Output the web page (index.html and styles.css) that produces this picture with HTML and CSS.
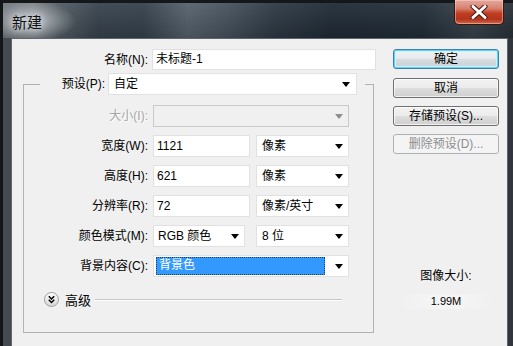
FILE: index.html
```html
<!DOCTYPE html>
<html lang="zh-CN">
<head>
<meta charset="utf-8">
<title>新建</title>
<link rel="stylesheet" href="styles.css">
</head>
<body>
<div class="window">
  <div class="titlebar">
    <span class="title">新建</span>
    <div class="close">
      <svg width="20" height="14" viewBox="0 0 20 14">
        <path d="M4 1.5 L16 12.5 M16 1.5 L4 12.5" stroke="#4a1a10" stroke-width="5" stroke-linecap="round"/>
        <path d="M4 1.5 L16 12.5 M16 1.5 L4 12.5" stroke="#ffffff" stroke-width="3" stroke-linecap="round"/>
      </svg>
    </div>
  </div>
  <div class="panel">
    <div class="main">
      <div class="name-row">
        <span class="lbl name-lbl">名称(N):</span>
        <div class="field name-field">未标题-1</div>
      </div>
      <fieldset class="group">
        <legend class="legend">
          <span class="lbl preset-lbl">预设(P):</span>
          <div class="field select preset-select">自定<i class="arrow"></i></div>
        </legend>
        <div class="row first">
          <span class="lbl row-lbl disabled">大小(I):</span>
          <div class="field select full disabled-field"><i class="arrow grey"></i></div>
        </div>
        <div class="row">
          <span class="lbl row-lbl">宽度(W):</span>
          <div class="field num">1121</div>
          <div class="field select unit">像素<i class="arrow"></i></div>
        </div>
        <div class="row">
          <span class="lbl row-lbl">高度(H):</span>
          <div class="field num">621</div>
          <div class="field select unit">像素<i class="arrow"></i></div>
        </div>
        <div class="row">
          <span class="lbl row-lbl">分辨率(R):</span>
          <div class="field num">72</div>
          <div class="field select unit">像素/英寸<i class="arrow"></i></div>
        </div>
        <div class="row">
          <span class="lbl row-lbl">颜色模式(M):</span>
          <div class="field select mode">RGB 颜色<i class="arrow"></i></div>
          <div class="field select unit">8 位<i class="arrow"></i></div>
        </div>
        <div class="row">
          <span class="lbl row-lbl">背景内容(C):</span>
          <div class="field select full bg-select"><span class="hl">背景色</span><i class="arrow"></i></div>
        </div>
        <div class="advanced">
          <span class="adv-icon">
            <svg width="15" height="15" viewBox="0 0 15 15">
              <defs>
                <linearGradient id="g" x1="0" y1="0" x2="0" y2="1">
                  <stop offset="0" stop-color="#ffffff"/>
                  <stop offset="1" stop-color="#d6d6d6"/>
                </linearGradient>
              </defs>
              <circle cx="7.5" cy="7.5" r="7" fill="url(#g)" stroke="#9c9c9c"/>
              <path d="M4.8 4.3 L7.5 7 L10.2 4.3 M4.8 7.8 L7.5 10.5 L10.2 7.8" fill="none" stroke="#000" stroke-width="1.5"/>
            </svg>
          </span>
          <span class="adv-text">高级</span>
          <span class="adv-line"></span>
        </div>
      </fieldset>
    </div>
    <div class="side">
      <div class="btn default">确定</div>
      <div class="btn">取消</div>
      <div class="btn">存储预设(S)...</div>
      <div class="btn off">删除预设(D)...</div>
      <div class="info">
        <div class="info-lbl">图像大小:</div>
        <div class="info-val">1.99M</div>
      </div>
    </div>
  </div>
</div>
</body>
</html>
```
FILE: styles.css
```css
* { box-sizing: border-box; }

body {
  margin: 0;
  width: 513px;
  height: 346px;
  overflow: hidden;
  background: #121517;
  font-family: "Liberation Sans", "Noto Sans CJK SC", sans-serif;
  font-size: 12px;
  color: #000;
}

.window {
  height: 346px;
  border-left: 3px solid #131619;
  border-top: 3px solid #15181b;
  padding: 0 5px 0 8px;
  background:
    radial-gradient(ellipse 45px 20px at 28px 18px, rgba(215,220,224,0.75), rgba(215,220,224,0) 100%) 0 0 / 100% 35px no-repeat,
    linear-gradient(to bottom, rgba(255,255,255,0.06), rgba(0,0,0,0.15)) 0 0 / 100% 35px no-repeat,
    linear-gradient(to right, #6f767c 0, #757b81 30px, #535c65 55px, #37424d 95px, #34404b 140px, #56616c 185px, #46515c 225px, #2e3944 270px, #1f2a35 330px, #222d38 420px, #38424b 470px, #262e35 513px) 0 0 / 100% 35px no-repeat,
    linear-gradient(to right, #454a51, #30363c);
}

.titlebar {
  height: 35px;
  display: flex;
  justify-content: space-between;
  align-items: flex-start;
  padding-left: 1px;
}

.title {
  font-family: "Noto Sans CJK SC", sans-serif;
  font-size: 15px;
  line-height: 18px;
  margin-top: 10px;
  color: #111;
  text-shadow: 0 0 6px #e3e7ea, 0 0 10px #d5dade;
}

.close {
  width: 50px;
  height: 25px;
  margin-top: -3px;
  margin-right: 4px;
  border: 1px solid #3a1610;
  border-top: none;
  border-radius: 0 0 5px 5px;
  background: linear-gradient(to bottom, #e3a99e 0%, #d7816f 35%, #c03d22 55%, #b4341c 80%, #cf6a4a 100%);
  box-shadow: inset 0 0 0 1px rgba(255,220,210,0.45);
  display: flex;
  align-items: center;
  justify-content: center;
}

.panel {
  height: 311px;
  background: #f0f0f0;
  border: 1px solid #5f666d;
  border-bottom: none;
  display: flex;
  padding-top: 10px;
}

.main {
  width: 364px;
}

.lbl {
  text-align: right;
  line-height: 16px;
  white-space: nowrap;
}

.name-row {
  display: flex;
  align-items: center;
  height: 21px;
}

.name-lbl {
  width: 136px;
  margin-right: 4px;
}

.field {
  position: relative;
  height: 22px;
  background: #fff;
  border: 1px solid #e1e1e1;
  line-height: 20px;
  padding-left: 3px;
  white-space: nowrap;
}

.name-field {
  width: 224px;
  height: 21px;
  line-height: 19px;
}

.select {
  padding-right: 16px;
}

.arrow {
  position: absolute;
  right: 5px;
  top: 8px;
  width: 0;
  height: 0;
  border-left: 4px solid transparent;
  border-right: 4px solid transparent;
  border-top: 5px solid #000;
}

.arrow.grey {
  border-top-color: #8e8e8e;
}

.group {
  margin: 3px 0 0 11px;
  width: 351px;
  padding: 0 0 25px 0;
  border: 1px solid #b3b3b3;
  min-width: 0;
}

.legend {
  margin-left: 16px;
  padding: 0 8px 0 0;
  display: flex;
  align-items: center;
}

.preset-lbl {
  width: 65px;
  margin-right: 3px;
  background: #f0f0f0;
}

.preset-select {
  width: 249px;
  padding-left: 5px;
}

.preset-select .arrow {
  right: 6px;
}

.row {
  display: flex;
  align-items: center;
  margin-top: 8px;
}

.row.first {
  margin-top: 10px;
}

.row-lbl {
  width: 124px;
  margin-right: 5px;
}

.disabled {
  color: #a6a6a6;
  text-shadow: 1px 1px 0 #fff;
}

.full {
  width: 196px;
}

.disabled-field {
  background: #f0f0f0;
  border-color: #c9c9c9;
}

.num {
  width: 97px;
  margin-right: 6px;
}

.unit {
  width: 93px;
  padding-left: 5px;
}

.mode {
  width: 92px;
  margin-right: 11px;
  padding-left: 4px;
}

.bg-select {
  padding: 1px 23px 1px 2px;
}

.hl {
  display: block;
  height: 18px;
  line-height: 17px;
  background: #3399ff;
  color: #fff;
  padding-left: 3px;
  outline: 1px dotted #1c3d66;
  outline-offset: -1px;
}

.advanced {
  display: flex;
  align-items: center;
  margin-top: 15px;
  padding-left: 20px;
  height: 15px;
}

.adv-icon {
  width: 15px;
  height: 15px;
  display: flex;
}

.adv-text {
  margin-left: 6px;
  font-family: "Noto Sans CJK SC", sans-serif;
  font-size: 13px;
  line-height: 15px;
}

.adv-line {
  margin-left: 4px;
  width: 247px;
  height: 2px;
  border-top: 1px solid #c6c6c6;
  border-bottom: 1px solid #fff;
}

.side {
  margin-left: 17px;
  width: 106px;
  display: flex;
  flex-direction: column;
}

.btn {
  height: 20px;
  margin-bottom: 8px;
  border: 1px solid #707070;
  border-radius: 3px;
  background: linear-gradient(to bottom, #f3f3f3 0%, #ebebeb 48%, #dddddd 52%, #cfcfcf 100%);
  box-shadow: inset 0 0 0 1px rgba(255,255,255,0.7);
  text-align: center;
  line-height: 18px;
}

.btn.default {
  margin-bottom: 9px;
  border-color: #3c7fb1;
  box-shadow: inset 0 0 0 1px #5fd3f5, inset 0 0 0 2px #d2f0fa;
  background: linear-gradient(to bottom, #f1f4f5 0%, #e6eaec 48%, #d6dcdf 52%, #c9d0d3 100%);
}

.btn.off {
  border-color: #adb2b5;
  background: #f4f4f4;
  box-shadow: none;
  color: #8d8d8d;
}

.info {
  margin-top: 106px;
  text-align: center;
}

.info-lbl {
  line-height: 16px;
}

.info-val {
  margin: 10px auto 0;
  width: 96px;
  line-height: 15px;
  font-size: 11px;
  background: linear-gradient(to right, rgba(255,255,255,0), rgba(255,255,255,0.35) 40%, rgba(255,255,255,0.35) 60%, rgba(255,255,255,0));
}
```
